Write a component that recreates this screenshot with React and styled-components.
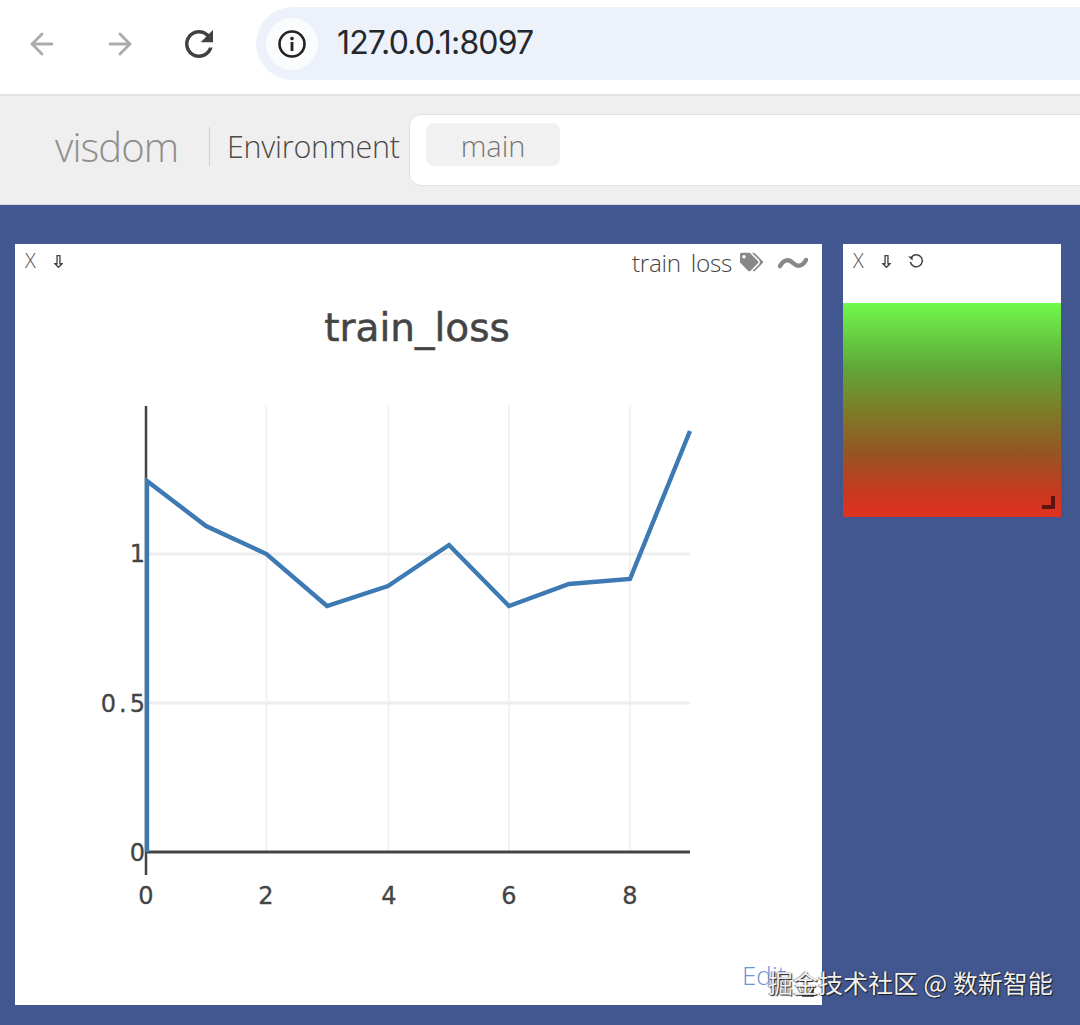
import React from 'react';
import styled, { createGlobalStyle } from 'styled-components';
import { ArrowLeft, ArrowRight } from 'lucide-react';
import { FaTags } from 'react-icons/fa';

const Global = createGlobalStyle`
  html, body { margin: 0; padding: 0; background: #425790; }
  body { width: 1080px; height: 1025px; overflow: hidden; font-family: "Open Sans", "Liberation Sans", sans-serif; }
`;
const Page = styled.div`
  position: relative;
  width: 1080px;
  height: 1025px;
  overflow: hidden;
  display: flex;
  flex-direction: column;
`;
const BrowserBar = styled.div`
  height: 96px;
  box-sizing: border-box;
  flex: none;
  background: #fff;
  border-bottom: 2px solid #e3e3e3;
  display: flex;
  align-items: center;
  padding: 0 0 7px 25px;
`;
const NavButton = styled.div`
  width: 34px;
  height: 34px;
  flex: none;
  margin-right: ${p => p.$gap}px;
  color: ${p => p.$color};
  display: flex;
  align-items: center;
  justify-content: center;
`;
const ReloadIcon = styled.svg`
  flex: none;
`;
const Omnibox = styled.div`
  flex: 1;
  height: 73px;
  margin-right: -60px;
  border-radius: 37px;
  background: #edf2fa;
  display: flex;
  align-items: center;
  padding-left: 10px;
`;
const SiteInfo = styled.div`
  width: 52px;
  height: 52px;
  flex: none;
  border-radius: 50%;
  background: #fbfcfe;
  display: flex;
  align-items: center;
  justify-content: center;
  margin-right: 19px;
`;
const Url = styled.span`
  font-family: "Inter", "Liberation Sans", sans-serif;
  font-size: 32px;
  letter-spacing: -0.85px;
  color: #24282d;
  line-height: 1;
  margin-top: -2px;
`;
const NavBar = styled.div`
  height: 109px;
  flex: none;
  background: #efefef;
  display: flex;
  align-items: center;
  padding: 0 0 0 55px;
  border-bottom: 1px solid #d9dde6;
  box-sizing: border-box;
`;
const Brand = styled.span`
  font-weight: 300;
  font-size: 40px;
  letter-spacing: -0.9px;
  color: #8e8e8e;
  width: 154px;
  height: 39px;
  line-height: 39px;
  flex: none;
  border-right: 1px solid #d0d0d0;
  margin: -7px 17px 0 0;
`;
const EnvLabel = styled.span`
  font-weight: 300;
  font-size: 30.5px;
  letter-spacing: -0.25px;
  color: #4a4a4a;
  width: 182px;
  flex: none;
  margin-top: -8px;
`;
const EnvBox = styled.div`
  flex: 1;
  margin-right: -40px;
  height: 72px;
  box-sizing: border-box;
  background: #fff;
  border: 1px solid #e2e2e2;
  border-radius: 12px;
  display: flex;
  align-items: flex-start;
  padding: 8px 16px;
`;
const Chip = styled.div`
  width: 134px;
  height: 43px;
  border-radius: 8px;
  background: #f1f1f1;
  color: #777;
  font-weight: 300;
  font-size: 29px;
  line-height: 45px;
  text-align: center;
`;
const Workspace = styled.div`
  flex: 1;
  display: flex;
  align-items: flex-start;
  gap: 21px;
  padding: 39px 0 0 15px;
`;
const Pane = styled.div`
  position: relative;
  flex: none;
  width: ${p => p.$w}px;
  height: ${p => p.$h}px;
  background: #fff;
  display: flex;
  flex-direction: column;
`;
const PaneBar = styled.div`
  height: ${p => p.$h}px;
  box-sizing: border-box;
  flex: none;
  display: flex;
  align-items: flex-start;
  padding: 6px 14px 0 10px;
  color: #666;
`;
const CloseMark = styled.span`
  font-weight: 300;
  font-size: 20px;
  width: 29px;
  height: 22px;
  line-height: 22px;
  flex: none;
  color: #555;
`;
const BarIcon = styled.svg`
  flex: none;
  margin: ${p => p.$top || 0}px ${p => p.$gap || 0}px 0 0;
`;
const PaneTitle = styled.span`
  margin-left: auto;
  font-weight: 300;
  font-size: 24.3px;
  line-height: 25px;
  word-spacing: 4px;
  color: #444;
  letter-spacing: -0.3px;
  margin-right: 8px;
`;
const TagIcon = styled(FaTags)`
  width: 23px;
  height: 20px;
  margin: 2px 15px 0 0;
  color: #888;
  flex: none;
`;
const Squiggle = styled.svg`
  flex: none;
  margin-top: 6px;
`;
const Chart = styled.svg`
  display: block;
  flex: none;
`;
const AxisText = styled.text`
  font-family: "DejaVu Sans", sans-serif;
  font-size: 24px;
  fill: #444;
  stroke: #444;
  stroke-width: 0.3px;
`;
const TitleText = styled.text`
  font-family: "DejaVu Sans", sans-serif;
  font-size: 39px;
  fill: #444;
  stroke: #444;
  stroke-width: 0.5px;
`;
const EditLink = styled.a`
  position: absolute;
  left: 727px;
  bottom: 12px;
  font-weight: 300;
  font-size: 26px;
  color: #6f93d8;
`;
const Grip = styled.div`
  position: absolute;
  right: ${p => p.$r}px;
  bottom: ${p => p.$b}px;
  width: ${p => p.$s}px;
  height: ${p => p.$s}px;
  box-sizing: border-box;
  border-right: 4px solid ${p => p.$c};
  border-bottom: 4px solid ${p => p.$c};
`;
const Heat = styled.div`
  flex: 1;
  background: linear-gradient(180deg, #70f94c 0%, #5fa838 30%, #7d7d28 50%, #965523 70%, #c73a20 88%, #e2301f 100%);
`;
const Watermark = styled.div`
  position: absolute;
  left: 768px;
  top: 965px;
  font-family: "Noto Sans CJK SC", sans-serif;
  font-size: 25px;
  line-height: 34px;
  white-space: nowrap;
  color: #f0f0f0;
  text-shadow: 1px 1px 1px #1a1a1a, -1px 0 1px rgba(30,30,30,.6);
`;

const DownArrow = ({ gap }) => (
  <BarIcon $top={4} $gap={gap} width="9" height="15" viewBox="0 0 10 15" fill="none" stroke="#444" strokeWidth="1.5">
    <path d="M3.4 1h3.2v9H9L5 14 1 10h2.4z" />
  </BarIcon>
);
const Undo = () => (
  <BarIcon $top={3} width="18" height="16" viewBox="0 0 18 16" fill="none" stroke="#444" strokeWidth="1.5">
    <path d="M4.2 4.6A6 6 0 1 1 3.4 9" />
    <path d="M1 3.6h4.6V7.4" fill="#444" stroke="none" />
  </BarIcon>
);

const pts = '147,852 147,481 206,526 266.5,554 327,606 388,586 449,545 509,606 569,584 630,579 690,431';
const OX = 15, OY = 278;
const vGrid = [266.5, 388.5, 509, 630];
const hGrid = [554, 703];
const xTicks = [[0, 146], [2, 266], [4, 389], [6, 509], [8, 630]];
const yTicks = [['1', 145, 562, 0], ['0.5', 148, 712, 3], ['0', 145, 861, 0]];

export default function App() {
  return (
    <Page>
      <Global />
      <BrowserBar>
        <NavButton $gap={44} $color="#a9abad"><ArrowLeft size={36} strokeWidth={2} /></NavButton>
        <NavButton $gap={45} $color="#a9abad"><ArrowRight size={36} strokeWidth={2} /></NavButton>
        <NavButton $gap={40} $color="#3f4145">
          <ReloadIcon width="42" height="42" viewBox="0 0 24 24" fill="currentColor">
            <path d="M17.65 6.35C16.2 4.9 14.21 4 12 4c-4.42 0-7.99 3.58-7.99 8s3.57 8 7.99 8c3.73 0 6.84-2.55 7.73-6h-2.08c-.82 2.33-3.04 4-5.65 4-3.31 0-6-2.69-6-6s2.69-6 6-6c1.66 0 3.14.69 4.22 1.78L13 11h7V4l-2.35 2.35z" />
          </ReloadIcon>
        </NavButton>
        <Omnibox>
          <SiteInfo>
            <svg width="30" height="30" viewBox="0 0 30 30" fill="none">
              <circle cx="15" cy="15" r="12.5" stroke="#222" strokeWidth="2.6" />
              <rect x="13.6" y="13" width="2.8" height="9" fill="#222" />
              <circle cx="15" cy="9.6" r="1.8" fill="#222" />
            </svg>
          </SiteInfo>
          <Url>127.0.0.1:8097</Url>
        </Omnibox>
      </BrowserBar>
      <NavBar>
        <Brand>visdom</Brand>
        <EnvLabel>Environment</EnvLabel>
        <EnvBox><Chip>main</Chip></EnvBox>
      </NavBar>
      <Workspace>
        <Pane $w={807} $h={761}>
          <PaneBar $h={34}>
            <CloseMark>X</CloseMark>
            <DownArrow />
            <PaneTitle>train loss</PaneTitle>
            <TagIcon />
            <Squiggle width="30" height="14" viewBox="0 0 30 14" fill="none" stroke="#888" strokeWidth="4.5" strokeLinecap="round">
              <path d="M2 10C6 3 11 3 15 7s9 4 13-3" />
            </Squiggle>
          </PaneBar>
          <Chart width="807" height="727" viewBox={`${OX} ${OY} 807 727`}>
            {vGrid.map(x => <line key={x} x1={x} x2={x} y1="406" y2="852" stroke="#f2f2f2" strokeWidth="2" />)}
            {hGrid.map(y => <line key={y} x1="146" x2="690" y1={y} y2={y} stroke="#eeeeee" strokeWidth="3" />)}
            <line x1="146" x2="146" y1="406" y2="875" stroke="#444" strokeWidth="2.5" />
            <line x1="146" x2="690" y1="852" y2="852" stroke="#444" strokeWidth="3" />
            <polyline points={pts} fill="none" stroke="#3d79b3" strokeWidth="4.4" strokeLinejoin="miter" />
            <TitleText x="417" y="341" textAnchor="middle">train_loss</TitleText>
            {xTicks.map(([t, x]) => <AxisText key={t} x={x} y="904" textAnchor="middle">{t}</AxisText>)}
            {yTicks.map(([t, x, y, ls]) => <AxisText key={t} x={x} y={y} textAnchor="end" letterSpacing={ls}>{t}</AxisText>)}
          </Chart>
          <EditLink>Edit</EditLink>
          <Grip $r={8} $b={8} $s={12} $c="#666" />
        </Pane>
        <Pane $w={218} $h={273}>
          <PaneBar $h={59}>
            <CloseMark>X</CloseMark>
            <DownArrow gap={16} />
            <Undo />
          </PaneBar>
          <Heat />
          <Grip $r={6} $b={8} $s={13} $c="#5b1410" />
        </Pane>
      </Workspace>
      <Watermark>掘金技术社区 @ 数新智能</Watermark>
    </Page>
  );
}
